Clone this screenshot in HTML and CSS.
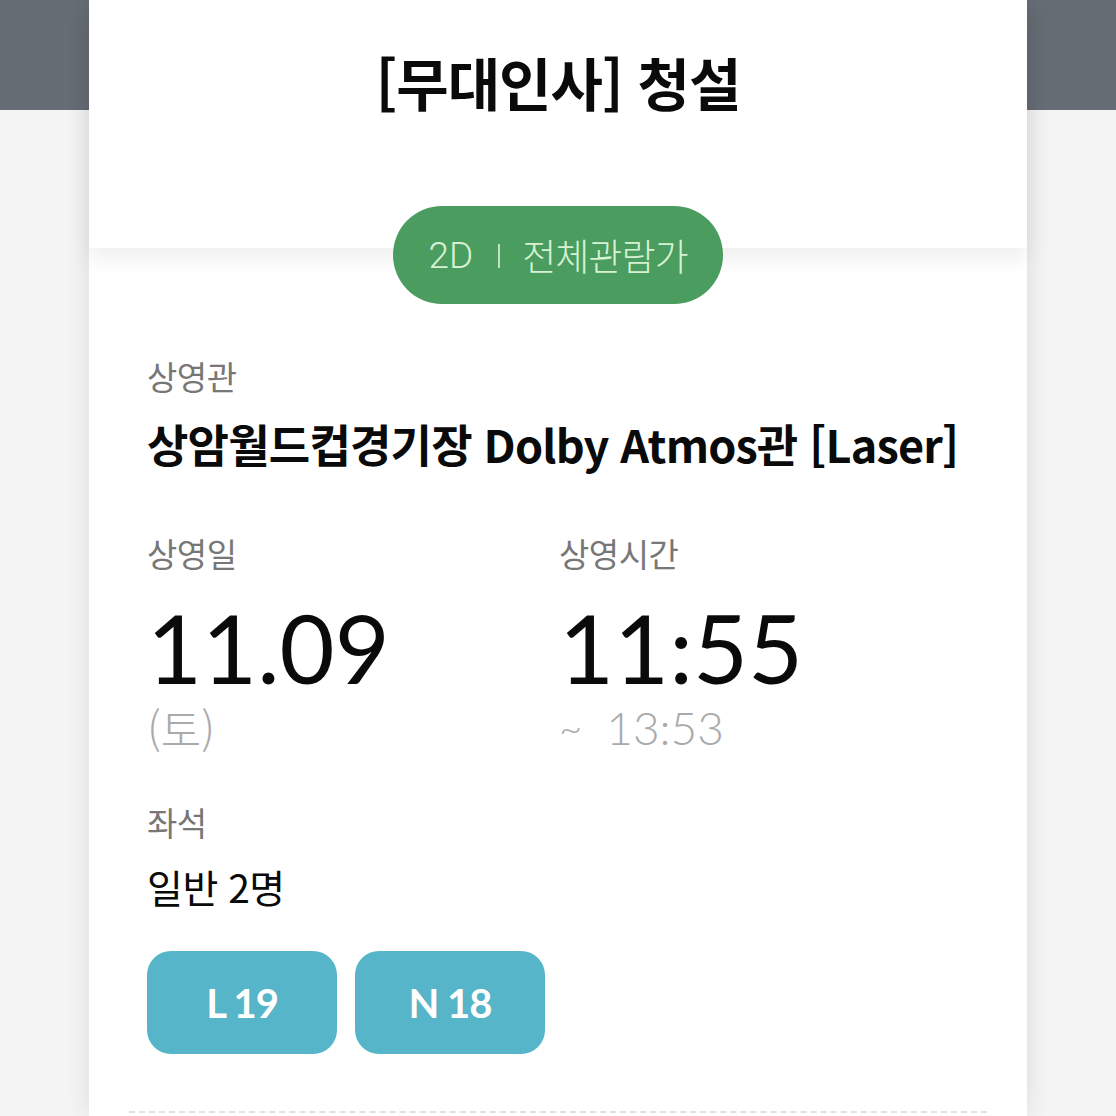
FILE: index.html
```html
<!DOCTYPE html>
<html lang="ko">
<head>
<meta charset="utf-8">
<link rel="stylesheet" href="styles.css">
</head>
<body>
<div class="card">
  <header class="card-head">
    <h1 class="title">[무대인사] 청설</h1>
  </header>
  <section class="card-body">
    <div class="pill-row">
      <div class="pill"><span class="pill-2d">2D</span><span class="pill-sep"></span><span class="pill-rate">전체관람가</span></div>
    </div>
    <div class="label label-venue">상영관</div>
    <div class="venue">상암월드컵경기장 Dolby Atmos관 [Laser]</div>
    <div class="cols">
      <div class="col">
        <div class="label">상영일</div>
        <div class="big">11.09</div>
        <div class="sub sub-day">(토)</div>
      </div>
      <div class="col">
        <div class="label">상영시간</div>
        <div class="big">11:55</div>
        <div class="sub"><span class="tilde">~</span>13:53</div>
      </div>
    </div>
    <div class="label label-seat">좌석</div>
    <div class="people">일반 2명</div>
    <div class="seats">
      <div class="seat">L 19</div>
      <div class="seat">N 18</div>
    </div>
    <div class="dash"></div>
  </section>
</div>
</body>
</html>
```

FILE: styles.css
```css
html, body {
  margin: 0;
  padding: 0;
}
body {
  width: 1116px;
  height: 1116px;
  overflow: hidden;
  background: linear-gradient(#676d75 0, #676d75 110px, #f4f4f5 110px);
  font-family: "Noto Sans CJK KR", "Noto Sans", sans-serif;
}
.card {
  width: 938px;
  margin: 0 auto;
  background: #fff;
  min-height: 1116px;
  box-shadow: 0 0 24px rgba(0, 0, 0, 0.10);
}
.card-head {
  position: relative;
  z-index: 1;
  height: 248px;
  background: #fff;
  box-shadow: 0 10px 22px rgba(0, 0, 0, 0.07);
  display: flex;
  justify-content: center;
}
.title {
  margin: 0;
  padding-top: 41px;
  font-size: 57px;
  line-height: 80px;
  font-weight: 700;
  color: #0a0a0a;
  letter-spacing: -1px;
}
.card-body {
  padding: 0 0 0 58px;
}
.pill-row {
  display: flex;
  justify-content: center;
  margin-left: -58px;
  margin-top: -42px;
  position: relative;
  z-index: 2;
}
.pill {
  width: 330px;
  height: 98px;
  border-radius: 49px;
  background: #4a9c5f;
  display: flex;
  align-items: center;
  justify-content: center;
  color: #d6f2d3;
  font-size: 37px;
  font-weight: 400;
}
.pill-2d {
  font-family: "Roboto", "Noto Sans", sans-serif;
  font-weight: 300;
  font-size: 37px;
}
.pill-sep {
  width: 2px;
  height: 24px;
  background: #bfe2c3;
  margin: 2px 22px 0 25px;
}
.pill-rate {
  font-weight: 300;
  letter-spacing: -1px;
}
.label {
  font-size: 33px;
  line-height: 40px;
  color: #777;
  font-weight: 400;
  letter-spacing: -0.5px;
}
.label-venue {
  margin-top: 52px;
}
.venue {
  margin-top: 20px;
  font-size: 45px;
  line-height: 56px;
  font-weight: 700;
  color: #0a0a0a;
  letter-spacing: -0.8px;
}
.cols {
  display: grid;
  grid-template-columns: 412px 1fr;
  margin-top: 61px;
}
.big {
  font-family: "Lato", "Noto Sans", sans-serif;
  font-size: 95px;
  line-height: 100px;
  color: #0a0a0a;
  margin-top: 24px;
}
.sub {
  font-family: "Lato", "Noto Sans CJK KR", sans-serif;
  font-weight: 300;
  font-size: 46px;
  line-height: 56px;
  color: #aaa;
  margin-top: 3px;
}
.sub-day {
  font-family: "Noto Sans CJK KR", sans-serif;
  font-weight: 300;
  font-size: 44px;
}
.tilde {
  font-size: 40px;
  margin-right: 24px;
  vertical-align: 2px;
}
.label-seat {
  margin-top: 46px;
}
.people {
  margin-top: 18px;
  font-size: 39px;
  line-height: 52px;
  color: #0a0a0a;
  letter-spacing: -0.5px;
}
.seats {
  display: flex;
  gap: 18px;
  margin-top: 39px;
}
.seat {
  width: 190px;
  height: 103px;
  border-radius: 24px;
  background: #56b5c8;
  color: #fff;
  font-family: "Lato", sans-serif;
  font-weight: 700;
  font-size: 40px;
  letter-spacing: -1px;
  display: flex;
  align-items: center;
  justify-content: center;
}
.dash {
  margin-top: 57px;
  margin-left: -18px;
  margin-right: 40px;
  border-top: 2px dashed #e2e2e2;
}
```
